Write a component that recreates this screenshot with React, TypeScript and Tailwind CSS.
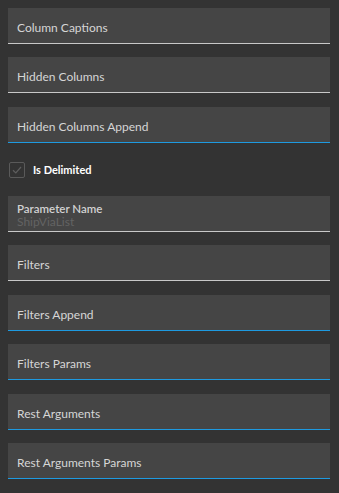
import React from 'react'

const fields = [
  { label: 'Column Captions', active: false, mt: 'mt-0' },
  { label: 'Hidden Columns', active: false, mt: 'mt-[13px]' },
  { label: 'Hidden Columns Append', active: true, mt: 'mt-[14px]' },
]

const fieldsAfter = [
  { label: 'Filters', active: false, mt: 'mt-[13px]' },
  { label: 'Filters Append', active: true, mt: 'mt-[14px]' },
  { label: 'Filters Params', active: true, mt: 'mt-[13px]' },
  { label: 'Rest Arguments', active: true, mt: 'mt-[14px]' },
  { label: 'Rest Arguments Params', active: true, mt: 'mt-[13px]' },
]

const Field = ({ label, active, mt }: { label: string; active: boolean; mt: string }) => (
  <div
    className={`${mt} h-[36px] shrink-0 bg-[#454545] border-b flex items-center pl-[9px] pt-[4px] ${
      active ? 'border-[#1e9ae0]' : 'border-[#c8c8c8]'
    }`}
  >
    <span className="text-[12px] text-[#d6d6d6] leading-none">{label}</span>
  </div>
)

export default function App() {
  return (
    <div
      className="w-[339px] h-[493px] bg-[#333333] pl-[8px] pr-[9px] pt-[8px] flex flex-col"
      style={{ fontFamily: 'Lato, "Noto Sans", sans-serif' }}
    >
      {fields.map((f) => (
        <Field key={f.label} {...f} />
      ))}

      <div className="mt-[14px] h-[26px] shrink-0 flex items-center gap-[8px] pl-[1px]">
        <div className="w-[16px] h-[16px] border border-[#5a5a5a] rounded-[2px] flex items-center justify-center">
          <svg width="12" height="12" viewBox="0 0 12 12" fill="none">
            <path d="M2 6.3 L4.8 9 L10 3" stroke="#5e5e5e" strokeWidth="1.2" />
          </svg>
        </div>
        <span className="text-[11px] font-bold text-white">Is Delimited</span>
      </div>

      <div className="mt-[13px] h-[36px] shrink-0 bg-[#454545] border-b border-[#c8c8c8] pl-[9px] pt-[6px]">
        <div className="text-[11.5px] font-semibold text-[#d2d2d2] leading-[13px]">Parameter Name</div>
        <div className="text-[12px] text-[#636363] leading-[14px]">ShipViaList</div>
      </div>

      {fieldsAfter.map((f) => (
        <Field key={f.label} {...f} />
      ))}
    </div>
  )
}
